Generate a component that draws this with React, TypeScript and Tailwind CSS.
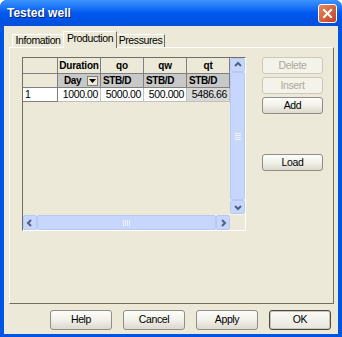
import React from 'react';

const font = { fontFamily: '"Liberation Sans", Arial, sans-serif' };

function XpButton({ label, disabled, primary, className }: { label: string; disabled?: boolean; primary?: boolean; className: string }) {
  return (
    <div
      className={`flex items-center justify-center rounded-[3px] border text-[10.5px] tracking-[-0.4px] ${className} ${
        disabled
          ? 'border-[#cac8bb] bg-[#f4f3ea] text-[#aca899]'
          : primary
          ? 'border-[#4a4a44] bg-gradient-to-b from-[#fbfbf8] to-[#e8e6dc] text-black shadow-[inset_0_0_0_1px_#c9c6b8]'
          : 'border-[#8f8d84] bg-gradient-to-b from-[#fdfdfb] via-[#f2f1ea] to-[#dcd8cc] text-black'
      }`}
    >
      {label}
    </div>
  );
}

function ArrowBtn({ dir, className }: { dir: 'up' | 'down' | 'left' | 'right'; className?: string }) {
  const d = {
    up: 'M3 7 L6 4 L9 7',
    down: 'M3 5 L6 8 L9 5',
    left: 'M7 3 L4 6 L7 9',
    right: 'M5 3 L8 6 L5 9',
  }[dir];
  return (
    <div className={`flex items-center justify-center rounded-[2px] border border-[#b7caf5] bg-[#c6d6fc] ${className ?? ''}`}>
      <svg width="12" height="12" viewBox="0 0 12 12">
        <path d={d} fill="none" stroke="#4d6185" strokeWidth="2" />
      </svg>
    </div>
  );
}

export default function App() {
  return (
    <div className="flex h-[337px] w-[342px] flex-col overflow-hidden rounded-t-[7px] bg-[#0054e3]" style={font}>
      {/* Title bar */}
      <div className="flex h-[26px] shrink-0 items-center justify-between bg-gradient-to-b from-[#3d95ff] via-[#0058ee] to-[#0050dc] pl-[7px] pr-[5px]">
        <span className="text-[12px] font-bold text-white [text-shadow:1px_1px_0_#0a1f6b]">Tested well</span>
        <div className="flex h-[19px] w-[19px] items-center justify-center rounded-[3px] border border-white bg-gradient-to-br from-[#e8885f] to-[#c4401c]">
          <svg width="11" height="11" viewBox="0 0 11 11">
            <path d="M2 2 L9 9 M9 2 L2 9" stroke="white" strokeWidth="2" strokeLinecap="square" />
          </svg>
        </div>
      </div>

      {/* Client area */}
      <div className="mx-[4px] mb-[3px] flex flex-1 flex-col bg-[#ece9d8] text-[10.5px] tracking-[-0.4px]">
        {/* Tabs */}
        <div className="mt-[6px] flex h-[15px] items-end pl-[8px]">
          <div className="flex h-[13px] w-[51px] items-center justify-center border-l border-t border-white text-black">
            Infomation
          </div>
          <div className="relative z-10 -mb-px flex h-[17px] w-[54px] items-center justify-center border-l border-r border-t border-l-white border-t-white border-r-[#716f64] bg-[#ece9d8] pb-[2px] text-black">
            Production
          </div>
          <div className="flex h-[13px] w-[48px] items-center justify-center border-r border-t border-r-[#716f64] border-t-white text-black">
            Pressures
          </div>
        </div>

        {/* Tab panel */}
        <div className="ml-[5px] mr-[4px] flex h-[257px] border border-b-[#716f64] border-l-white border-r-[#716f64] border-t-white bg-[#ece9d8] pl-[12px] pr-[10px] pt-[9px]">
          {/* Grid */}
          <div className="flex h-[174px] w-[224px] flex-col border border-b-white border-l-[#716f64] border-r-white border-t-[#716f64] bg-[#ece9d8]">
            <div className="flex flex-1">
              <div className="flex flex-1 flex-col">
                <div className="flex h-[16px] text-[10px] font-bold tracking-[-0.2px]">
                  <div className="w-[35px] border-b border-r border-[#808080] bg-[#ece9d8]" />
                  <div className="flex w-[43px] items-center justify-center border-b border-r border-[#808080] bg-[#ece9d8]">Duration</div>
                  <div className="flex w-[43px] items-center justify-center border-b border-r border-[#808080] bg-[#ece9d8]">qo</div>
                  <div className="flex w-[43px] items-center justify-center border-b border-r border-[#808080] bg-[#ece9d8]">qw</div>
                  <div className="flex w-[43px] items-center justify-center border-b border-r border-[#808080] bg-[#ece9d8]">qt</div>
                </div>
                <div className="flex h-[14px] text-[10px] font-bold tracking-[-0.4px]">
                  <div className="w-[35px] border-b border-r border-[#808080] bg-[#ece9d8]" />
                  <div className="flex w-[43px] items-center justify-between border-b border-r border-[#808080] bg-[#c8c8c8] pl-[6px] pr-[2px]">
                    <span>Day</span>
                    <div className="flex h-[10px] w-[11px] items-center justify-center border border-[#808080] bg-[#ece9d8]">
                      <svg width="7" height="4" viewBox="0 0 7 4">
                        <path d="M0 0 H7 L3.5 4 Z" fill="black" />
                      </svg>
                    </div>
                  </div>
                  <div className="flex w-[43px] items-center border-b border-r border-[#808080] bg-[#c8c8c8] pl-[2px]">STB/D</div>
                  <div className="flex w-[43px] items-center border-b border-r border-[#808080] bg-[#c8c8c8] pl-[2px]">STB/D</div>
                  <div className="flex w-[43px] items-center border-b border-r border-[#808080] bg-[#c8c8c8] pl-[2px]">STB/D</div>
                </div>
                <div className="flex h-[14px]">
                  <div className="flex w-[35px] items-center border-b border-r border-[#808080] bg-white pl-[2px]">1</div>
                  <div className="flex w-[43px] items-center justify-end border-b border-r border-[#c0c0c0] bg-white pr-[2px]">1000.00</div>
                  <div className="flex w-[43px] items-center justify-end border-b border-r border-[#c0c0c0] bg-white pr-[2px]">5000.00</div>
                  <div className="flex w-[43px] items-center justify-end border-b border-r border-[#c0c0c0] bg-white pr-[2px]">500.000</div>
                  <div className="flex w-[43px] items-center justify-end border-b border-r border-[#c0c0c0] bg-[#d8d8d8] pr-[2px]">5486.66</div>
                </div>
              </div>
              {/* Vertical scrollbar */}
              <div className="flex w-[15px] flex-col bg-[#f4f3ee] pb-[1px]">
                <ArrowBtn dir="up" className="h-[14px]" />
                <div className="flex flex-1 items-center justify-center rounded-[2px] border border-[#b7caf5] bg-[#c6d6fc]">
                  <div className="flex flex-col gap-[1px]">
                    <div className="h-px w-[6px] bg-[#eef4fe]" />
                    <div className="h-px w-[6px] bg-[#eef4fe]" />
                    <div className="h-px w-[6px] bg-[#eef4fe]" />
                    <div className="h-px w-[6px] bg-[#eef4fe]" />
                  </div>
                </div>
                <ArrowBtn dir="down" className="h-[14px]" />
              </div>
            </div>
            {/* Horizontal scrollbar */}
            <div className="flex h-[15px] items-stretch">
              <div className="flex flex-1 bg-[#f4f3ee]">
                <ArrowBtn dir="left" className="w-[14px]" />
                <div className="flex flex-1 items-center justify-center rounded-[2px] border border-[#b7caf5] bg-[#c6d6fc]">
                  <div className="flex gap-[1px]">
                    <div className="h-[6px] w-px bg-[#eef4fe]" />
                    <div className="h-[6px] w-px bg-[#eef4fe]" />
                    <div className="h-[6px] w-px bg-[#eef4fe]" />
                    <div className="h-[6px] w-px bg-[#eef4fe]" />
                  </div>
                </div>
                <ArrowBtn dir="right" className="w-[14px]" />
              </div>
              <div className="w-[15px] bg-[#ece9d8]" />
            </div>
          </div>

          {/* Side buttons */}
          <div className="ml-[16px] flex flex-col">
            <XpButton label="Delete" disabled className="h-[17px] w-[61px]" />
            <XpButton label="Insert" disabled className="mt-[3px] h-[17px] w-[61px]" />
            <XpButton label="Add" className="mt-[3px] h-[17px] w-[61px]" />
            <XpButton label="Load" className="mt-[40px] h-[17px] w-[61px]" />
          </div>
        </div>

        {/* Bottom buttons */}
        <div className="mt-[6px] flex gap-[11px] pl-[46px]">
          <XpButton label="Help" className="h-[20px] w-[62px]" />
          <XpButton label="Cancel" className="h-[20px] w-[62px]" />
          <XpButton label="Apply" className="h-[20px] w-[62px]" />
          <XpButton label="OK" primary className="h-[20px] w-[62px]" />
        </div>
      </div>
    </div>
  );
}
